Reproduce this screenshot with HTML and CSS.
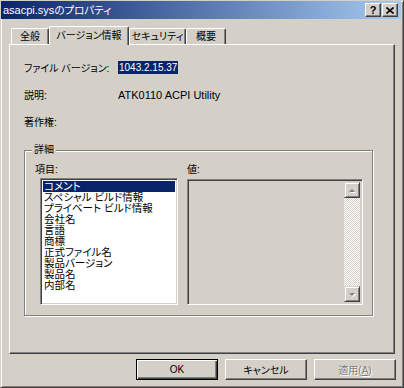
FILE: index.html
```html
<!DOCTYPE html>
<html lang="ja">
<head>
    <meta charset="UTF-8">
    <title>asacpi.sysのプロパティ</title>
    <link rel="stylesheet" href="styles.css">
</head>
<body>
    <div class="window">
        <!-- caption -->
        <div class="titlebar">
            <span class="title"><span class="latin">asacpi.sys</span>のプロパティ</span>
            <div class="caption-btns">
                <span class="cap-btn help">?</span>
                <span class="cap-btn close">
                    <svg width="8" height="7" viewBox="0 0 8 7"><path d="M0.5 0.5 L7.5 6.5 M7.5 0.5 L0.5 6.5" stroke="#000" stroke-width="1.6" fill="none"/></svg>
                </span>
            </div>
        </div>

        <!-- tabs -->
        <div class="tabs">
            <div class="tab tab-general">全般</div>
            <div class="tab tab-version active">バージョン情報</div>
            <div class="tab tab-security">セキュリティ</div>
            <div class="tab tab-summary">概要</div>
        </div>

        <div class="panel">
            <div class="prop">
                <span class="prop-name">ファイル バージョン:</span>
                <span class="prop-value"><span class="selected-text">1043.2.15.37</span></span>
            </div>
            <div class="prop">
                <span class="prop-name">説明:</span>
                <span class="prop-value latin">ATK0110 ACPI Utility</span>
            </div>
            <div class="prop">
                <span class="prop-name">著作権:</span>
                <span class="prop-value"></span>
            </div>

            <!-- details group -->
            <div class="group">
                <span class="group-title">詳細</span>
                <div class="group-body">
                    <div class="col col-items">
                        <div class="col-label label-items">項目:</div>
                        <ul class="listbox">
                            <li class="selected">コメント</li>
                            <li>スペシャル ビルド情報</li>
                            <li>プライベート ビルド情報</li>
                            <li>会社名</li>
                            <li>言語</li>
                            <li>商標</li>
                            <li>正式ファイル名</li>
                            <li>製品バージョン</li>
                            <li>製品名</li>
                            <li>内部名</li>
                        </ul>
                    </div>
                    <div class="col col-value">
                        <div class="col-label label-value">値:</div>
                        <div class="valuebox">
                            <div class="scrollbar">
                                <span class="scroll-btn">
                                    <svg width="14" height="14" viewBox="0 0 14 14"><path d="M4 9 L10 9 L7 6 Z" fill="#fff" transform="translate(1 1)"/><path d="M4 9 L10 9 L7 6 Z" fill="#808080"/></svg>
                                </span>
                                <span class="scroll-track"></span>
                                <span class="scroll-btn">
                                    <svg width="14" height="14" viewBox="0 0 14 14"><path d="M4 6 L10 6 L7 9 Z" fill="#fff" transform="translate(1 1)"/><path d="M4 6 L10 6 L7 9 Z" fill="#808080"/></svg>
                                </span>
                            </div>
                        </div>
                    </div>
                </div>
            </div>
        </div>

        <div class="buttons">
            <button class="btn default">OK</button>
            <button class="btn">キャンセル</button>
            <button class="btn disabled">適用(<u>A</u>)</button>
        </div>
    </div>
</body>
</html>
```

FILE: styles.css
```css
body {
    margin: 0;
    font-family: "Liberation Sans", "Noto Sans CJK JP", sans-serif;
    font-size: 10px;
    font-feature-settings: "palt";
    color: #000;
    background: #d4d0c8;
}
.latin {
    font-size: 11px;
}
.window {
    width: 404px;
    height: 388px;
    box-sizing: border-box;
    background: #d4d0c8;
    border: 1px solid;
    border-color: #d4d0c8 #404040 #404040 #d4d0c8;
    box-shadow: inset 1px 1px 0 #fff, inset -1px -1px 0 #808080;
    display: flex;
    flex-direction: column;
}

/* caption */
.titlebar {
    height: 18px;
    margin-right: 2px;
    padding: 0 3px 0 2px;
    display: flex;
    align-items: center;
    justify-content: space-between;
    background: linear-gradient(to right, #0a246a, #a6caf0);
}
.title {
    color: #fff;
    line-height: 18px;
    font-size: 10.5px;
}
.caption-btns {
    display: flex;
    gap: 1px;
}
.cap-btn {
    width: 16px;
    height: 14px;
    box-sizing: border-box;
    background: #d4d0c8;
    border: 1px solid;
    border-color: #fff #404040 #404040 #fff;
    box-shadow: inset -1px -1px 0 #808080;
    display: flex;
    align-items: center;
    justify-content: center;
    font-weight: bold;
    font-size: 11px;
    line-height: 12px;
}

/* tabs */
.tabs {
    height: 25px;
    padding-left: 10px;
    display: flex;
    align-items: flex-end;
}
.tab {
    height: 16px;
    box-sizing: border-box;
    border-top: 1px solid #fff;
    border-left: 1px solid #fff;
    border-right: 1px solid #404040;
    box-shadow: inset -1px 0 0 #808080;
    border-radius: 2px 2px 0 0;
    display: flex;
    align-items: center;
    justify-content: center;
    line-height: 14px;
    font-size: 10px;
    white-space: nowrap;
}
.tab-general { width: 38px; }
.tab-version { width: 80px; }
.tab-security { width: 57px; }
.tab-summary { width: 40px; }
.tab.active {
    height: 19px;
    margin-bottom: -1px;
    position: relative;
    z-index: 1;
    background: #d4d0c8;
    padding-bottom: 1px;
}

/* page */
.panel {
    height: 310px;
    margin: 0 8px;
    box-sizing: border-box;
    padding: 9px 0 0 14px;
    border-top: 1px solid #fff;
    border-left: 1px solid #fff;
    border-right: 1px solid #404040;
    border-bottom: 1px solid #404040;
    box-shadow: inset -1px -1px 0 #808080;
}
.prop {
    height: 27px;
    display: flex;
    align-items: center;
}
.prop-name {
    width: 94px;
}
.selected-text {
    background: #0a246a;
    color: #fff;
    font-size: 10px;
    line-height: 13px;
    padding: 0 1px;
    display: inline-block;
}

.group {
    position: relative;
    width: 349px;
    height: 166px;
    margin-top: 15px;
    box-sizing: border-box;
    border: 1px solid #808080;
    box-shadow: inset 1px 1px 0 #fff, 1px 1px 0 #fff;
}
.group-title {
    position: absolute;
    top: -8px;
    left: 7px;
    padding: 0 2px;
    background: #d4d0c8;
    line-height: 14px;
}
.group-body {
    display: flex;
    gap: 9px;
    padding: 13px 9px 0 15px;
}
.col-label {
    height: 14px;
    line-height: 12px;
}
.label-items {
    margin-left: -5px;
}
.col-items {
    width: 138px;
}
.col-value {
    width: 176px;
}
.listbox,
.valuebox {
    margin: 0;
    box-sizing: border-box;
    border: 1px solid;
    border-color: #808080 #fff #fff #808080;
    box-shadow: inset 1px 1px 0 #404040, inset -1px -1px 0 #d4d0c8;
}
.listbox {
    height: 127px;
    list-style: none;
    padding: 2px 2px 0 2px;
    background: #fff;
}
.listbox li {
    height: 11px;
    line-height: 11px;
    padding-left: 1px;
    font-size: 10.5px;
    white-space: nowrap;
}
.listbox li.selected {
    background: #0a246a;
    color: #fff;
}
.valuebox {
    height: 126px;
    margin-top: 1px;
    padding: 2px;
    display: flex;
    justify-content: flex-end;
}
.scrollbar {
    width: 16px;
    display: flex;
    flex-direction: column;
}
.scroll-btn {
    height: 16px;
    box-sizing: border-box;
    background: #d4d0c8;
    border: 1px solid;
    border-color: #d4d0c8 #404040 #404040 #d4d0c8;
    box-shadow: inset 1px 1px 0 #fff, inset -1px -1px 0 #808080;
    display: flex;
    align-items: center;
    justify-content: center;
}
.scroll-track {
    flex: 1;
    background: repeating-conic-gradient(#fff 0 25%, #d4d0c8 0 50%) 0 0 / 2px 2px;
}

/* dialog buttons */
.buttons {
    margin-top: 5px;
    padding-right: 7px;
    display: flex;
    justify-content: flex-end;
    gap: 7px;
}
.btn {
    width: 82px;
    height: 21px;
    padding: 0;
    font: inherit;
    color: #000;
    background: #d4d0c8;
    border: 1px solid;
    border-color: #fff #404040 #404040 #fff;
    box-shadow: inset -1px -1px 0 #808080;
}
.btn.default {
    border-color: #000;
    box-shadow: inset 1px 1px 0 #fff, inset -1px -1px 0 #404040, inset -2px -2px 0 #808080;
}
.btn.disabled {
    color: #808080;
    text-shadow: 1px 1px 0 #fff;
}
```
